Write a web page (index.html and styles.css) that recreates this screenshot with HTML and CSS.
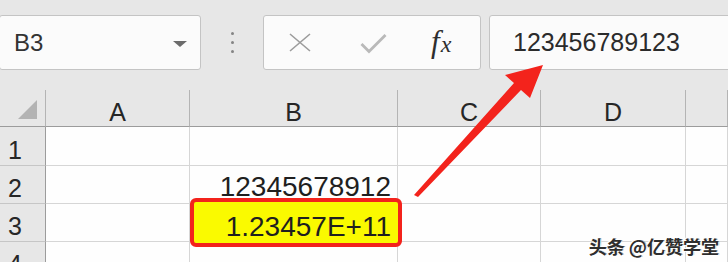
FILE: index.html
```html
<!DOCTYPE html>
<html lang="zh-CN">
<head>
  <meta charset="UTF-8">
  <meta name="viewport" content="width=device-width, initial-scale=1.0">
  <title>Excel 科学计数法</title>
  <link rel="stylesheet" href="styles.css">
</head>
<body>
  <div class="toolbar">
    <div class="namebox">
      <span>B3</span>
      <span class="caret"></span>
    </div>
    <div class="grip"><i></i><i></i><i></i></div>
    <div class="fx-buttons">
      <svg class="icon-cancel" width="22" height="19" viewBox="0 0 22 19">
        <path d="M1 1 L21 18 M21 1 L1 18" stroke="#9c9c9c" stroke-width="1.6" fill="none"/>
      </svg>
      <svg class="icon-enter" width="27" height="21" viewBox="0 0 27 21">
        <path d="M1.5 11 L9 18.5 L25.5 2" stroke="#b9b9b9" stroke-width="2.8" fill="none"/>
      </svg>
      <span class="fx"><span class="f">f</span><span class="x">x</span></span>
    </div>
    <div class="formula">123456789123</div>
  </div>

  <div class="grid">
    <div class="corner"><span class="corner-mark"></span></div>
    <div class="col-head">A</div>
    <div class="col-head">B</div>
    <div class="col-head">C</div>
    <div class="col-head">D</div>
    <div class="col-head"></div>

    <div class="row-head">1</div>
    <div class="cell"></div>
    <div class="cell"></div>
    <div class="cell"></div>
    <div class="cell"></div>
    <div class="cell"></div>

    <div class="row-head">2</div>
    <div class="cell"></div>
    <div class="cell num">12345678912</div>
    <div class="cell"></div>
    <div class="cell"></div>
    <div class="cell"></div>

    <div class="row-head">3</div>
    <div class="cell"></div>
    <div class="cell num active">
      <span class="highlight"></span>
      <span class="value">1.23457E+11</span>
    </div>
    <div class="cell"></div>
    <div class="cell"></div>
    <div class="cell"></div>

    <div class="row-head">4</div>
    <div class="cell"></div>
    <div class="cell"></div>
    <div class="cell"></div>
    <div class="cell"></div>
    <div class="cell"></div>
  </div>

  <!-- annotation arrow from the cell up to the formula bar -->
  <svg class="arrow" width="728" height="262" viewBox="0 0 728 262">
    <polygon points="414,195 514,83 505,75 543,65 530,98 521,90 418,197" fill="#f3231c"/>
  </svg>

  <div class="watermark">头条 @亿赞学堂</div>
</body>
</html>
```

FILE: styles.css
```css
body {
  margin: 0;
  width: 728px;
  height: 262px;
  overflow: hidden;
  position: relative;
  background-color: #e7e7e7;
  font-family: "Liberation Sans", Arial, "Noto Sans CJK SC", sans-serif;
  color: #262626;
}
.toolbar {
  display: flex;
  align-items: flex-start;
  height: 90px;
  padding-top: 15px;
  box-sizing: border-box;
}
.namebox {
  width: 202px;
  height: 55px;
  margin-left: -1px;
  box-sizing: border-box;
  border: 1px solid #c4c4c4;
  border-radius: 3px;
  background-color: #fbfbfb;
  display: flex;
  align-items: center;
  justify-content: space-between;
  padding: 0 13px 0 14px;
  font-size: 24px;
  color: #333;
}
.caret {
  width: 0;
  height: 0;
  border-left: 7px solid transparent;
  border-right: 7px solid transparent;
  border-top: 6px solid #6b6b6b;
  margin-top: 2px;
}
.grip {
  width: 62px;
  height: 55px;
  display: flex;
  flex-direction: column;
  align-items: center;
  justify-content: center;
  gap: 6px;
}
.grip i {
  width: 3px;
  height: 3px;
  border-radius: 50%;
  background-color: #848484;
}
.fx-buttons {
  width: 218px;
  height: 55px;
  box-sizing: border-box;
  border: 1px solid #c4c4c4;
  border-radius: 3px;
  background-color: #fbfbfb;
  display: flex;
  align-items: center;
  padding-left: 25px;
}
.icon-enter {
  margin-left: 49px;
  margin-top: 2px;
}
.fx {
  margin-left: 44px;
  font-family: "Liberation Serif", "Times New Roman", serif;
  font-style: italic;
  color: #2e2e2e;
  line-height: 1;
  margin-top: -2px;
}
.fx .f {
  font-size: 31px;
}
.fx .x {
  font-size: 24px;
  margin-left: 1px;
}
.formula {
  flex: 1;
  height: 55px;
  margin-left: 8px;
  margin-right: -4px;
  box-sizing: border-box;
  border: 1px solid #c4c4c4;
  border-radius: 3px;
  background-color: #fbfbfb;
  display: flex;
  align-items: center;
  padding-left: 23px;
  font-size: 25px;
  color: #2b2b2b;
}
.grid {
  display: grid;
  grid-template-columns: 46px 144px 208px 143px 145px 1fr;
  grid-template-rows: 37px 39px 38px 38px 38px;
}
.corner,
.col-head,
.row-head {
  background-color: #e7e7e7;
  box-sizing: border-box;
}
.corner {
  border-right: 1px solid #b4b4b4;
  border-bottom: 1px solid #9c9c9c;
  position: relative;
}
.corner-mark {
  position: absolute;
  left: 18px;
  top: 10px;
  width: 0;
  height: 0;
  border-left: 19px solid transparent;
  border-bottom: 19px solid #b3b3b3;
}
.col-head {
  border-right: 1px solid #b4b4b4;
  border-bottom: 1px solid #9c9c9c;
  display: flex;
  align-items: flex-end;
  justify-content: center;
  font-size: 25px;
  line-height: 1;
  padding-bottom: 1px;
}
.row-head {
  border-right: 1px solid #9c9c9c;
  border-bottom: 1px solid #c6c6c6;
  display: flex;
  align-items: flex-end;
  padding: 0 0 2px 8px;
  font-size: 25px;
  line-height: 1;
}
.cell {
  background-color: #fefefe;
  border-right: 1px solid #d6d6d6;
  border-bottom: 1px solid #d6d6d6;
  box-sizing: border-box;
}
.num {
  display: flex;
  align-items: flex-end;
  justify-content: flex-end;
  padding: 0 6px 2px 0;
  font-size: 28px;
  line-height: 1;
  color: #1f1f1f;
}
.active {
  position: relative;
  padding-bottom: 0;
}
.highlight {
  position: absolute;
  left: 0;
  top: -6px;
  width: 212px;
  height: 49px;
  box-sizing: border-box;
  border: 4px solid #f3231c;
  border-radius: 6px;
  background-color: #fafa00;
}
.value {
  position: relative;
  z-index: 1;
}
.arrow {
  position: absolute;
  top: 0;
  left: 0;
  pointer-events: none;
}
.watermark {
  position: absolute;
  right: 9px;
  bottom: 3px;
  font-family: "Noto Sans CJK SC", sans-serif;
  font-weight: bold;
  font-size: 18px;
  color: #2e2e2e;
  text-shadow: 1px 1px 0 #ffffff, -1px -1px 0 #ffffff, 1px 0 0 #9a9a9a;
}
```
